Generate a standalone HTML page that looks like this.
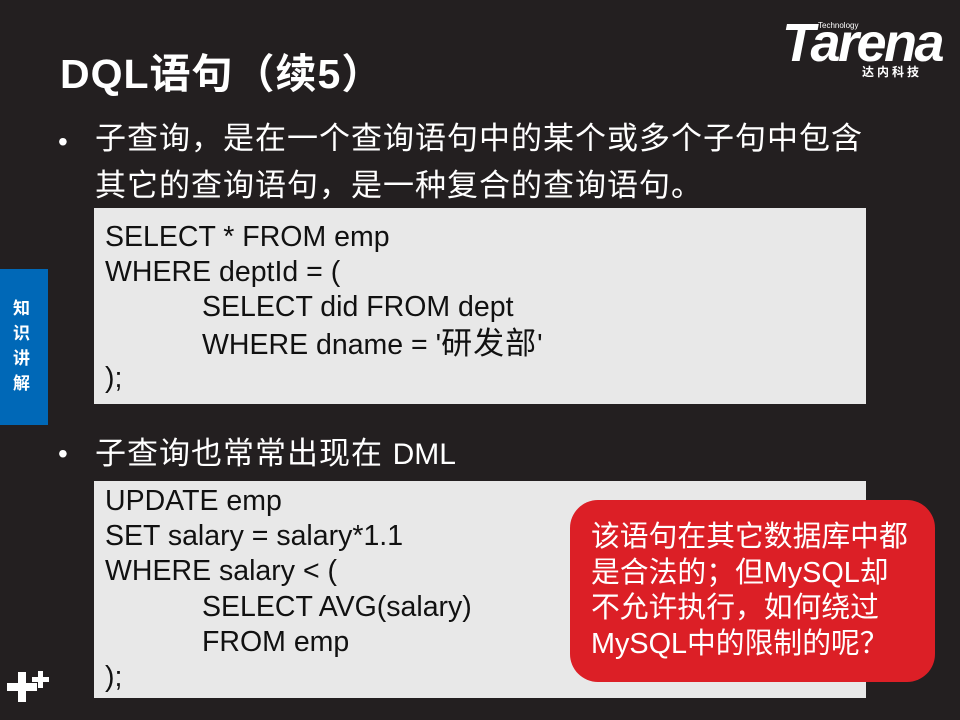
<!DOCTYPE html>
<html><head><meta charset="utf-8"><style>
body{margin:0;width:960px;height:720px;background:#231f20;position:relative;overflow:hidden;font-family:"Liberation Sans","Noto Sans CJK SC",sans-serif;color:#fff}
.a{position:absolute;white-space:nowrap}
.code{position:absolute;left:94px;width:772px;background:#e8e8e8;color:#111;font-size:28.5px;line-height:35.2px;padding-left:11px;box-sizing:border-box}
.code div{height:35.2px}
.in{padding-left:97px}
.c{font-size:31px;letter-spacing:1px}
</style></head><body>
<div class="a" style="left:60px;top:40px;font-size:41px;font-weight:bold;letter-spacing:1px">DQL语句（续5）</div>
<div class="a" style="left:782px;top:16px;font-size:54px;font-weight:bold;font-style:italic;letter-spacing:-2.5px;line-height:54px">Tarena</div>
<div class="a" style="left:818px;top:21px;font-size:8px">Technology</div>
<div class="a" style="left:862px;top:63px;font-size:12px;font-weight:bold;letter-spacing:3px">达内科技</div>
<div class="a" style="left:0;top:269px;width:48px;height:156px;background:#0068b7"></div>
<div class="a" style="left:13px;top:296px;font-size:17px;font-weight:bold;line-height:25px;width:20px;white-space:normal">知识讲解</div>
<div class="a" style="left:7px;top:683px;width:30px;height:8px;background:#fff"></div>
<div class="a" style="left:18px;top:672px;width:8px;height:30px;background:#fff"></div>
<div class="a" style="left:32px;top:677px;width:17px;height:5px;background:#fff"></div>
<div class="a" style="left:38px;top:671px;width:5px;height:17px;background:#fff"></div>
<div class="a" style="left:58px;top:118px;font-size:28px;line-height:47px">•</div>
<div class="a" style="left:95px;top:115px;font-size:31px;line-height:47px;letter-spacing:1px">子查询，是在一个查询语句中的某个或多个子句中包含<br>其它的查询语句，是一种复合的查询语句。</div>
<div class="code" style="top:208px;height:196px;padding-top:12px">
<div>SELECT * FROM emp</div><div>WHERE deptId = (</div><div class="in">SELECT did FROM dept</div><div class="in">WHERE dname = '<span class="c">研发部</span>'</div><div>);</div></div>
<div class="a" style="left:58px;top:430px;font-size:28px;line-height:47px">•</div>
<div class="a" style="left:95px;top:430px;font-size:31px;line-height:47px;letter-spacing:1px">子查询也常常出现在 <span style="font-size:30px;letter-spacing:0">DML</span></div>
<div class="code" style="top:481px;height:217px;padding-top:3px">
<div>UPDATE emp</div><div>SET salary = salary*1.1</div><div>WHERE salary &lt; (</div><div class="in">SELECT AVG(salary)</div><div class="in">FROM emp</div><div>);</div></div>
<div class="a" style="left:570px;top:500px;width:365px;height:182px;background:#dc1f26;border-radius:28px"></div>
<div class="a" style="left:591px;top:520px;font-size:28.8px;line-height:35.5px">该语句在其它数据库中都<br>是合法的；但MySQL却<br>不允许执行，如何绕过<br>MySQL中的限制的呢？</div>
</body></html>
